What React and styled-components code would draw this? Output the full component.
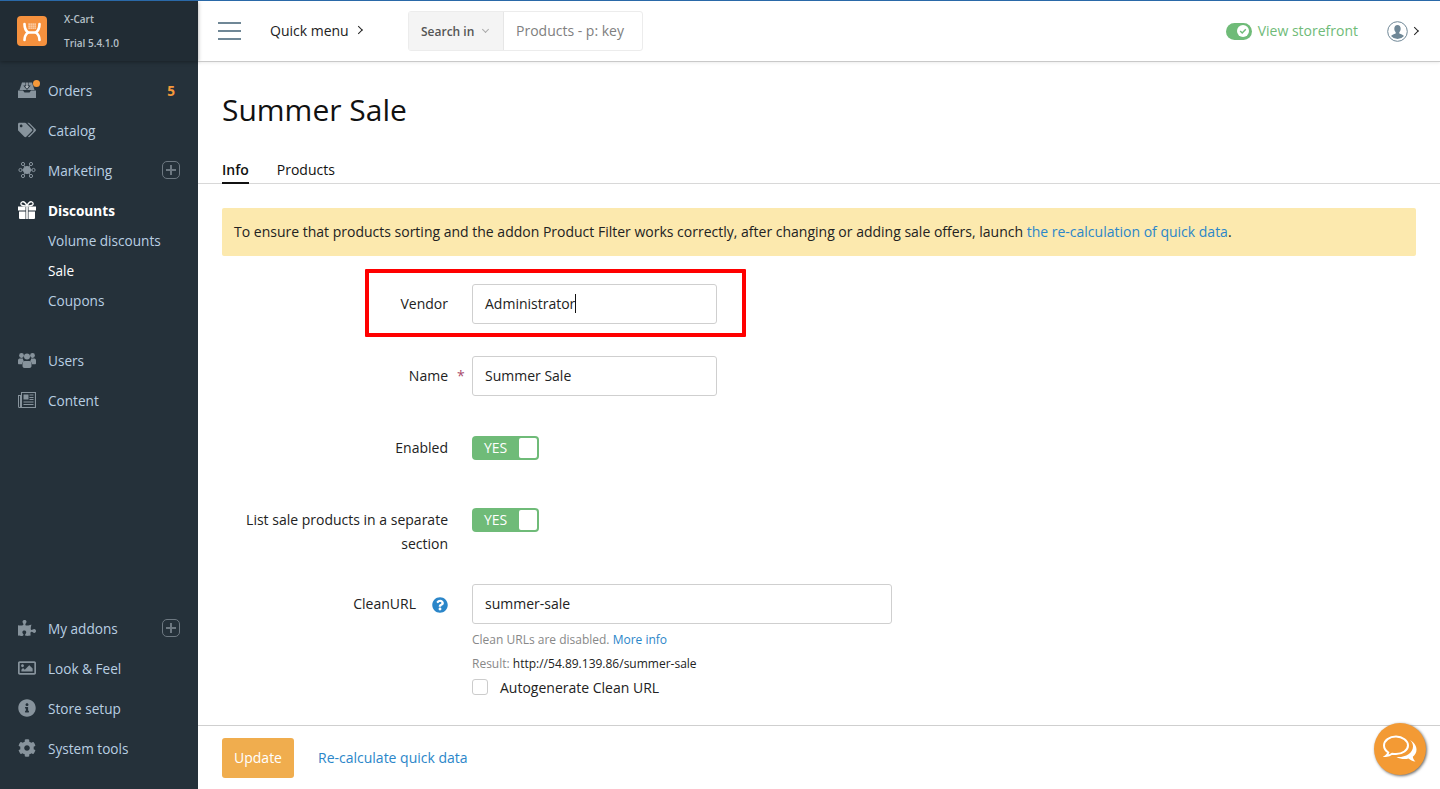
import React from "react";
import styled, { createGlobalStyle } from "styled-components";
import {
  FaTags,
  FaPuzzlePiece,
  FaRegImage,
  FaInfoCircle,
  FaCog,
  FaQuestionCircle,
} from "react-icons/fa";

const GlobalStyle = createGlobalStyle`
  * { box-sizing: border-box; }
  html, body { margin: 0; height: 100%; overflow: hidden; }
  body {
    font-family: "Open Sans", "Liberation Sans", sans-serif;
    font-size: 14px;
    color: #222;
    background: #fff;
  }
`;

function InboxIcon() {
  return (
    <svg width="18" height="18" viewBox="0 0 18 18" fill="currentColor">
      <path d="M4 1.500h10l2.500 7.500h-15z" />
      <path d="M7.500 1h3v3.500h2.200L9 9 5.300 4.500h2.200z" fill="#25313a" />
      <path d="M8.300 1.500h1.400v3.800h1.400L9 7.800 6.900 5.300h1.400z" fill="#b4bcc2" />
      <path d="M0 9.500h5l1.500 2h5l1.500-2h5V17H0z" />
    </svg>
  );
}

function NodesIcon() {
  const dots = [
    [2.5, 9],
    [15.5, 9],
    [5, 3],
    [13, 3],
    [5, 15],
    [13, 15],
  ];
  return (
    <svg width="18" height="18" viewBox="0 0 18 18" fill="none" stroke="currentColor">
      <circle cx="9" cy="9" r="3.6" fill="currentColor" />
      {dots.map(([x, y]) => (
        <g key={`${x}-${y}`}>
          <line x1="9" y1="9" x2={x} y2={y} />
          <circle cx={x} cy={y} r="1.6" fill="#25313a" />
        </g>
      ))}
    </svg>
  );
}

function GiftIcon() {
  return (
    <svg width="18" height="18" viewBox="0 0 18 18" fill="currentColor">
      <path d="M9 5C7.500 1.500 5.800.5 4.400.8 2.800 1.200 2.500 3 3.500 4c1 1 3 1 5.500 1zM9 5c1.500-3.500 3.200-4.500 4.600-4.200 1.600.4 1.900 2.200.9 3.200-1 1-3 1-5.500 1z" fill="none" stroke="currentColor" strokeWidth="1.300" />
      <path d="M0 5.500h7.500v4H0zM10.500 5.500H18v4h-7.500zM1 10.500h6.500V18H2a1 1 0 0 1-1-1zM10.500 10.500H17V17a1 1 0 0 1-1 1h-5.500z" />
      <path d="M8 5.500h2v12.500H8z" opacity="0.85" />
    </svg>
  );
}

function UsersIcon() {
  return (
    <svg width="18" height="18" viewBox="0 0 18 18" fill="currentColor">
      <circle cx="3.500" cy="4.500" r="2.400" />
      <circle cx="14.500" cy="4.500" r="2.400" />
      <circle cx="9" cy="5.500" r="3" />
      <path d="M0 9.500C0 8 1 7.500 2 7.500h3c-.2 1 .3 2 1 2.700-1.200.5-2 1.600-2 3H1c-.6 0-1-.4-1-1zM18 9.500c0-1.500-1-2-2-2h-3c.2 1 -.3 2-1 2.700 1.200.5 2 1.600 2 3h3c.6 0 1-.4 1-1z" />
      <path d="M6.800 10h4.400c1.700 0 2.300 1.200 2.300 2.600V15c0 1.200-.8 2-2 2h-5c-1.200 0-2-.8-2-2v-2.400C4.500 11.200 5.100 10 6.800 10z" />
    </svg>
  );
}

function NewspaperIcon() {
  return (
    <svg width="18" height="18" viewBox="0 0 18 18" fill="currentColor">
      <path d="M3 1h15v16H1.500A1.500 1.500 0 0 1 0 15.500V4h3zm1 1v14H16.900V2zM1 5v10.500a.5.500 0 0 0 1 0V5z" fillRule="evenodd" />
      <path d="M5.500 3.500h5v5h-5zM11.500 3.500h4v1h-4zM11.500 6h4v1h-4zM11.500 8h4v1h-4zM5.500 10.500h10v1h-10zM5.500 13h10v1h-10z" />
    </svg>
  );
}

function LogoMark() {
  return (
    <svg width="30" height="30" viewBox="0 0 30 30">
      <rect width="30" height="30" rx="4" fill="#f5913e" />
      <g fill="none" stroke="#fff" strokeWidth="2.600" strokeLinecap="round">
        <path d="M7.500 8c0 4 1 6.500 3.500 8.500C8.500 18.500 7.500 20 7.500 24" />
        <path d="M22.500 8c0 4-1 6.500-3.500 8.500 2.500 2 3.500 3.500 3.500 7.500" />
        <path d="M11 16.500h8" />
      </g>
      <g fill="#fff">
        {[11.5, 13.5, 15.5, 17.5].map((x) =>
          [7.5, 9.5, 11.5].map((y) => (
            <rect key={`${x}-${y}`} x={x} y={y} width="1.200" height="1.200" />
          ))
        )}
      </g>
    </svg>
  );
}

function ChatIcon() {
  return (
    <svg width="34" height="28" viewBox="0 0 34 28">
      <path
        d="M27 5c4 2.500 6.500 5.500 6.500 9.500 0 3-1.300 5.500-3.700 7.300.2 1.800 1.100 3.300 2.700 4.700-2.900-.3-5.200-1.400-7-3-3.700 1-8.500.6-12-1.500 8 .8 16.500-3.500 16.500-10.500 0-2.500-1-4.700-3-6.500z"
        fill="#fff"
      />
      <path
        d="M13 1.500C6.400 1.500 1 5.500 1 10.500c0 2.800 1.700 5.300 4.300 7-.3 1.400-1.300 2.600-2.500 3.500 2.400-.1 4.700-1 6.300-2.300 1.200.2 2.500.3 3.900.3 6.600 0 12-4 12-8.500S19.600 1.500 13 1.500z"
        fill="#f39a34"
        stroke="#fff"
        strokeWidth="2"
      />
    </svg>
  );
}

export default function App() {
  return (
    <Page>
      <GlobalStyle />
      <Sidebar>
        <Brand>
          <LogoMark />
          <BrandText>
            <span>X-Cart</span>
            <span>Trial 5.4.1.0</span>
          </BrandText>
        </Brand>
        <Nav>
          <NavGroup>
            <NavRow>
              <NavIcon>
                <InboxIcon />
                <OrderDot />
              </NavIcon>
              Orders
              <OrderCount>5</OrderCount>
            </NavRow>
            <NavRow>
              <NavIcon>
                <FaTags size={18} />
              </NavIcon>
              Catalog
            </NavRow>
            <NavRow>
              <NavIcon>
                <NodesIcon />
              </NavIcon>
              Marketing
              <PlusBox />
            </NavRow>
            <NavRow $active>
              <NavIcon $active>
                <GiftIcon />
              </NavIcon>
              Discounts
            </NavRow>
            <SubList>
              <SubRow>Volume discounts</SubRow>
              <SubRow $active>Sale</SubRow>
              <SubRow>Coupons</SubRow>
            </SubList>
            <NavRow>
              <NavIcon>
                <UsersIcon />
              </NavIcon>
              Users
            </NavRow>
            <NavRow>
              <NavIcon>
                <NewspaperIcon />
              </NavIcon>
              Content
            </NavRow>
          </NavGroup>
          <NavGroup>
            <NavRow>
              <NavIcon>
                <FaPuzzlePiece size={18} />
              </NavIcon>
              My addons
              <PlusBox />
            </NavRow>
            <NavRow>
              <NavIcon>
                <FaRegImage size={18} />
              </NavIcon>
              Look &amp; Feel
            </NavRow>
            <NavRow>
              <NavIcon>
                <FaInfoCircle size={18} />
              </NavIcon>
              Store setup
            </NavRow>
            <NavRow>
              <NavIcon>
                <FaCog size={18} />
              </NavIcon>
              System tools
            </NavRow>
          </NavGroup>
        </Nav>
      </Sidebar>

      <Main>
        <TopBar>
          <Burger>
            <i />
            <i />
            <i />
          </Burger>
          <QuickMenu>
            Quick menu
            <Chevron />
          </QuickMenu>
          <SearchBox>
            <SearchScope>
              Search in
              <ScopeCaret />
            </SearchScope>
            <SearchHint>Products - p: key</SearchHint>
          </SearchBox>
          <TopRight>
            <StoreSwitch>
              <svg width="12" height="12" viewBox="0 0 12 12">
                <circle cx="6" cy="6" r="6" fill="#fff" />
                <path d="M3.200 6l2 2 3.600-3.800" fill="none" stroke="#6fbb78" strokeWidth="1.400" />
              </svg>
            </StoreSwitch>
            <StoreLink>View storefront</StoreLink>
            <UserMenu>
              <svg width="21" height="21" viewBox="0 0 21 21">
                <circle cx="10.500" cy="10.500" r="9.800" fill="#fff" stroke="#6f8796" />
                <path
                  d="M10.500 4c2 0 3.200 1.500 3.200 3.700 0 1.500-.6 2.800-1.400 3.500v1.200c1.800.7 3.600 1.300 4.700 2.600a8.500 8.500 0 0 1-13 0c1.100-1.300 2.900-1.900 4.700-2.600v-1.200c-.8-.7-1.400-2-1.400-3.500C7.300 5.500 8.500 4 10.500 4z"
                  fill="#6f8796"
                />
              </svg>
              <Chevron />
            </UserMenu>
          </TopRight>
        </TopBar>

        <Content>
          <Title>Summer Sale</Title>
          <Tabs>
            <Tab $active>Info</Tab>
            <Tab>Products</Tab>
          </Tabs>
          <Body>
            <Notice>
              To ensure that products sorting and the addon Product Filter works correctly, after
              changing or adding sale offers, launch <Link>the re-calculation of quick data</Link>.
            </Notice>
            <Form>
              <FormRow>
                <RedBox />
                <Label>Vendor</Label>
                <Gutter />
                <Field>
                  Administrator
                  <Caret />
                </Field>
              </FormRow>
              <FormRow>
                <Label>Name</Label>
                <Gutter>
                  <Required>*</Required>
                </Gutter>
                <Field>Summer Sale</Field>
              </FormRow>
              <FormRow>
                <Label>Enabled</Label>
                <Gutter />
                <Toggle>
                  YES
                  <Knob />
                </Toggle>
              </FormRow>
              <FormRow>
                <Label>List sale products in a separate section</Label>
                <Gutter />
                <Toggle>
                  YES
                  <Knob />
                </Toggle>
              </FormRow>
              <FormRow>
                <Label>
                  CleanURL
                  <HelpIcon>
                    <FaQuestionCircle size={16} />
                  </HelpIcon>
                </Label>
                <Gutter />
                <div>
                  <Field $wide>summer-sale</Field>
                  <HintList>
                    <Hint>
                      Clean URLs are disabled. <Link>More info</Link>
                    </Hint>
                    <Hint>
                      Result: <strong>http://54.89.139.86/summer-sale</strong>
                    </Hint>
                  </HintList>
                  <CheckRow>
                    <CheckBox />
                    Autogenerate Clean URL
                  </CheckRow>
                </div>
              </FormRow>
            </Form>
          </Body>
        </Content>

        <Footer>
          <UpdateButton>Update</UpdateButton>
          <Link>Re-calculate quick data</Link>
        </Footer>
        <ChatBubble>
          <ChatIcon />
        </ChatBubble>
      </Main>
    </Page>
  );
}

const Page = styled.div`
  display: flex;
  height: 100vh;
  border-top: 1px solid #2a69a8;
  overflow: hidden;
`;

const Sidebar = styled.aside`
  width: 198px;
  flex-shrink: 0;
  display: flex;
  flex-direction: column;
  background-color: #25313a;
`;

const Brand = styled.div`
  height: 60px;
  flex-shrink: 0;
  display: flex;
  align-items: center;
  gap: 17px;
  padding: 0 0 0 17px;
  background-color: #212c34;
  box-shadow: 0 1px 4px rgba(0, 0, 0, 0.35);
`;

const BrandText = styled.div`
  display: flex;
  flex-direction: column;
  gap: 10px;
  font-size: 10px;
  line-height: 14px;
  font-weight: 600;
  color: #b6c0c8;
`;

const Nav = styled.nav`
  flex: 1;
  display: flex;
  flex-direction: column;
  justify-content: space-between;
  padding: 9px 0 21px;
  font-size: 13.6px;
`;

const NavGroup = styled.div`
  display: flex;
  flex-direction: column;
`;

const NavRow = styled.div`
  height: 40px;
  display: flex;
  align-items: center;
  padding: 0 18px;
  font-weight: ${(p) => (p.$active ? 700 : 400)};
  color: ${(p) => (p.$active ? "#fff" : "#b9cfe2")};
`;

const NavIcon = styled.span`
  position: relative;
  width: 18px;
  height: 18px;
  margin-right: 12px;
  display: flex;
  color: ${(p) => (p.$active ? "#fff" : "#87939c")};
`;

const OrderDot = styled.i`
  position: absolute;
  top: -1px;
  right: -4px;
  width: 7px;
  height: 7px;
  border-radius: 50%;
  background-color: #f5993a;
`;

const OrderCount = styled.b`
  margin-left: auto;
  padding-right: 5px;
  color: #f5993a;
`;

const PlusBox = styled.span`
  position: relative;
  margin-left: auto;
  width: 18px;
  height: 18px;
  border: 1px solid #6d7881;
  border-radius: 5px;

  &::before,
  &::after {
    content: "";
    position: absolute;
    background-color: #6d7881;
  }

  &::before {
    left: 3px;
    right: 3px;
    top: 7px;
    height: 2px;
  }

  &::after {
    top: 3px;
    bottom: 3px;
    left: 7px;
    width: 2px;
  }
`;

const SubList = styled.div`
  margin-top: -4px;
  padding: 0 0 24px 48px;
`;

const SubRow = styled.div`
  height: 30px;
  line-height: 30px;
  color: ${(p) => (p.$active ? "#fff" : "#b9cfe2")};
`;

const Main = styled.main`
  position: relative;
  flex: 1;
  min-width: 0;
  display: flex;
  flex-direction: column;
`;

const TopBar = styled.header`
  height: 61px;
  flex-shrink: 0;
  display: flex;
  align-items: center;
  padding: 0 20px;
  border-bottom: 1px solid #c9c9c9;
  box-shadow: 0 1px 3px rgba(0, 0, 0, 0.08);
`;

const Burger = styled.div`
  width: 23px;
  display: flex;
  flex-direction: column;
  gap: 6px;
  margin-right: 29px;

  i {
    height: 2px;
    background-color: #6f8796;
  }
`;

const Chevron = styled.i`
  display: inline-block;
  width: 6px;
  height: 6px;
  margin-left: 8px;
  border-top: 1px solid #222;
  border-right: 1px solid #222;
  transform: rotate(45deg) translate(-1px, 1px);
`;

const QuickMenu = styled.div`
  width: 138px;
  display: flex;
  align-items: center;
  padding-bottom: 2px;
`;

const SearchBox = styled.div`
  width: 235px;
  height: 40px;
  display: flex;
  border: 1px solid #ececec;
  border-radius: 3px;
`;

const SearchScope = styled.div`
  width: 95px;
  display: flex;
  align-items: center;
  padding-left: 12px;
  background-color: #f4f4f4;
  border-right: 1px solid #e6e6e6;
  font-size: 12px;
  font-weight: 600;
  color: #555;
`;

const ScopeCaret = styled.i`
  width: 5px;
  height: 5px;
  margin: -3px 0 0 9px;
  border-right: 1px solid #aaa;
  border-bottom: 1px solid #aaa;
  transform: rotate(45deg);
`;

const SearchHint = styled.div`
  padding-left: 12px;
  line-height: 38px;
  color: #808080;
`;

const TopRight = styled.div`
  margin-left: auto;
  display: flex;
  align-items: center;
`;

const StoreSwitch = styled.span`
  width: 26px;
  height: 17px;
  display: flex;
  align-items: center;
  justify-content: flex-end;
  padding-right: 3px;
  border-radius: 9px;
  background-color: #6fbb78;
`;

const StoreLink = styled.span`
  margin: 0 0 2px 6px;
  color: #6fbb78;
`;

const UserMenu = styled.div`
  margin-left: 29px;
  display: flex;
  align-items: center;
  width: 33px;
  flex-shrink: 0;

  i {
    margin-left: 5px;
  }
`;

const Content = styled.div`
  flex: 1;
  min-height: 0;
  overflow: hidden;
`;

const Title = styled.h1`
  margin: 28px 24px 0;
  font-size: 30px;
  line-height: 40px;
  font-weight: 400;
  color: #111;
`;

const Tabs = styled.div`
  display: flex;
  gap: 28px;
  height: 29px;
  margin-top: 25px;
  padding: 0 24px;
  border-bottom: 1px solid #d8d8d8;
`;

const Tab = styled.div`
  height: 29px;
  line-height: 30px;
  font-weight: ${(p) => (p.$active ? 600 : 400)};
  color: #111;
  border-bottom: ${(p) => (p.$active ? "2px solid #111" : "none")};
`;

const Body = styled.div`
  padding: 24px 24px 0;
`;

const Notice = styled.div`
  height: 48px;
  padding: 0 12px;
  line-height: 47px;
  border-radius: 2px;
  background-color: #fce9ae;
  color: #222;
  white-space: nowrap;
`;

const Link = styled.a`
  color: #2b86c9;
`;

const Form = styled.div`
  display: flex;
  flex-direction: column;
  gap: 32px;
  margin-top: 28px;
`;

const FormRow = styled.div`
  position: relative;
  display: flex;
  align-items: flex-start;
  min-height: 40px;
`;

const RedBox = styled.div`
  position: absolute;
  left: 143px;
  top: -15px;
  width: 381px;
  height: 68px;
  border: 4px solid #f00;
  border-radius: 1px;
  pointer-events: none;
`;

const Label = styled.div`
  width: 226px;
  margin-bottom: -4px;
  padding-top: 8px;
  line-height: 24px;
  text-align: right;
  color: #222;
`;

const Gutter = styled.div`
  width: 24px;
  flex-shrink: 0;
  padding: 8px 0 0 9px;
`;

const Required = styled.span`
  line-height: 24px;
  color: #a94b6d;
`;

const Field = styled.div`
  width: ${(p) => (p.$wide ? "420px" : "245px")};
  height: 40px;
  padding: 0 12px 2px;
  display: flex;
  align-items: center;
  border: 1px solid #cfcfcf;
  border-radius: 3px;
  color: #222;
`;

const Caret = styled.i`
  width: 1px;
  height: 19px;
  background-color: #111;
`;

const Toggle = styled.div`
  position: relative;
  width: 67px;
  height: 24px;
  margin-top: 8px;
  padding-left: 12px;
  line-height: 24px;
  border-radius: 4px;
  background-color: #6fbb78;
  color: #fff;
`;

const Knob = styled.i`
  position: absolute;
  top: 2px;
  right: 2px;
  width: 18px;
  height: 20px;
  border-radius: 2px;
  background-color: #fff;
`;

const HelpIcon = styled.span`
  display: inline-block;
  width: 16px;
  height: 16px;
  margin-left: 16px;
  vertical-align: -4px;
  color: #2b86c9;
`;

const HintList = styled.div`
  margin-top: 4px;
`;

const Hint = styled.div`
  height: 24px;
  line-height: 24px;
  font-size: 12px;
  color: #888;

  strong {
    font-weight: 400;
    color: #222;
  }
`;

const CheckRow = styled.div`
  display: flex;
  align-items: center;
  gap: 12px;
  height: 24px;
  margin-top: -1px;
`;

const CheckBox = styled.i`
  width: 16px;
  height: 16px;
  border: 1px solid #ccc;
  border-radius: 3px;
`;

const Footer = styled.footer`
  height: 64px;
  flex-shrink: 0;
  display: flex;
  align-items: center;
  gap: 24px;
  padding: 0 24px;
  border-top: 1px solid #cfcfcf;
`;

const UpdateButton = styled.div`
  width: 72px;
  height: 40px;
  line-height: 40px;
  text-align: center;
  border-radius: 3px;
  background-color: #f0ad4e;
  color: #fff;
`;

const ChatBubble = styled.div`
  position: absolute;
  right: 14px;
  bottom: 14px;
  width: 52px;
  height: 52px;
  display: flex;
  align-items: center;
  justify-content: center;
  border-radius: 50%;
  background-color: #f39a34;
  box-shadow: 1px 1px 3px rgba(0, 0, 0, 0.6);
`;
